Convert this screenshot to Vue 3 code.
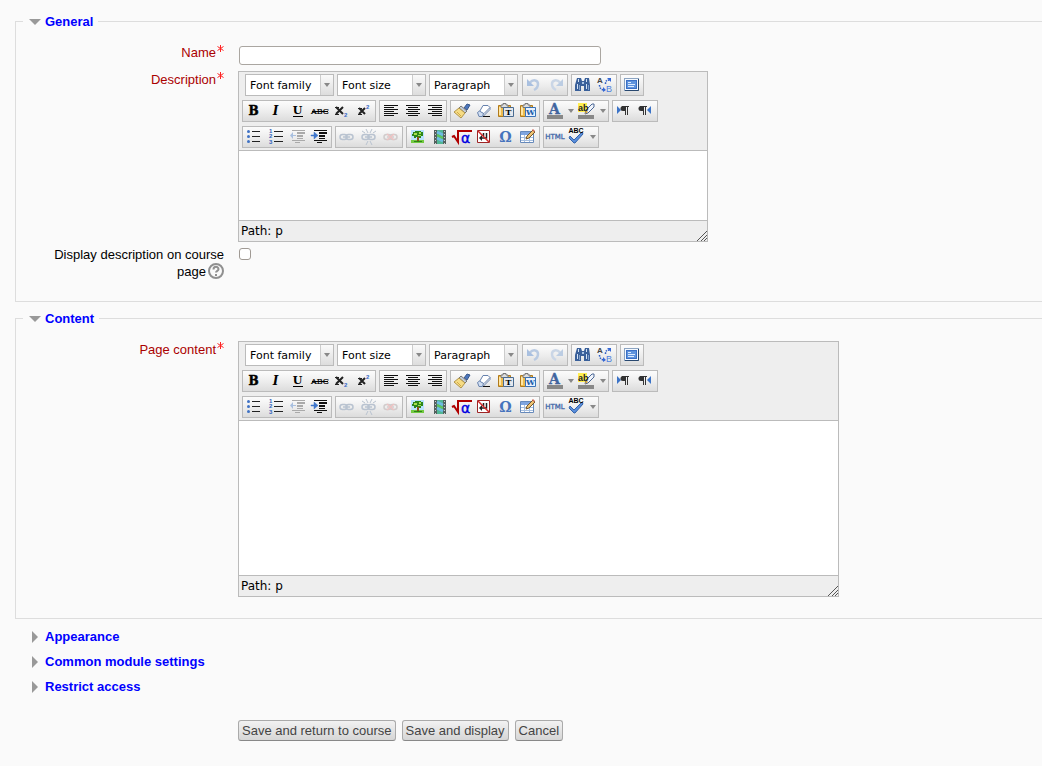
<script setup>
import { reactive, ref } from 'vue';

const name = ref('');
const showDescription = ref(false);
const collapsed = ['Appearance', 'Common module settings', 'Restrict access'];

const editors = reactive({
  description: { text: '', size: 'small' },
  page: { text: '', size: 'large' },
});

const selects = ['Font family', 'Font size', 'Paragraph'];

const toolbar = [
  [['undo', 'redo'], ['find', 'replace'], ['fullscreen']],
  [
    ['bold', 'italic', 'underline', 'strike', 'sub', 'sup'],
    ['left', 'center', 'right'],
    ['cleanup', 'eraser', 'pastetext', 'pasteword'],
    ['forecolor', 'split', 'backcolor', 'split'],
    ['ltr', 'rtl'],
  ],
  [
    ['bullist', 'numlist', 'outdent', 'indent'],
    ['link', 'unlink', 'nolink'],
    ['image', 'media', 'math', 'nbsp', 'omega', 'table'],
    ['html', 'spell', 'split'],
  ],
];

const disabled = ['undo', 'redo', 'outdent', 'link', 'unlink', 'nolink'];

const serif = 'font-family="DejaVu Serif, serif" font-weight="bold"';
const sans = 'font-family="Liberation Sans, sans-serif"';
const clipboard = '<path d="M3.500 4.500h12v11h-12z" fill="#eebb4e" stroke="#b07a1c"/><path d="M5 6v8" stroke="#ffe7a6" stroke-width="2"/><path d="M6 6.500V4h2V2.500h3V4h2v2.500z" fill="#ddd" stroke="#777"/>';
const pilcrow = '<path d="M8 5.500h7M11.500 5v9M13.500 5v9" stroke="#333"/><path d="M11.500 5H9a2.250 2.250 0 0 0 0 5h2.500z" fill="#333"/>';
const chain = '<rect x="4" y="7.500" width="7" height="5" rx="2.500"/><rect x="10" y="7.500" width="7" height="5" rx="2.500"/><path d="M7 10h7"/>';

// every glyph is drawn on a 22x20 canvas
const icons = {
  undo: '<path d="M7 7.500C10 4 15 5 15 9c0 3-2 5-4 6" fill="none" stroke="#b9cae2" stroke-width="2.500"/><path d="M4 4v7h7z" fill="#a9c0e0"/>',
  redo: '<path d="M15 7.500C12 4 7 5 7 9c0 3 2 5 4 6" fill="none" stroke="#cad6e6" stroke-width="2.500"/><path d="M18 4v7h-7z" fill="#bccde3"/>',
  find: '<path d="M5 3h4l1 3h2l1-3h4l1 7v6h-6v-5h-3v5H3v-6z" fill="#3a609a"/><path d="M6.500 4v3M14.500 4v3M5.500 9v5M14.500 9v5" stroke="#d4e3f5"/><path d="M7.500 10v5M16.500 10v5" stroke="#7f9fca"/><path d="M10 7h2v2h-2z" fill="#a9c3e4"/>',
  replace: `<text x="3" y="8" font-size="8" font-weight="bold" ${sans} fill="#444">A</text><text x="12" y="17" font-size="9" ${sans} fill="#4d82df">B</text><path d="M11.500 9c0-3 1-4 4-4M5.500 10c0 3 2 5 5 5" fill="none" stroke="#315fc8" stroke-width="1.500" stroke-dasharray="1.500 1"/><path d="M13 3h4v4zM9 12l3 3-3 2z" fill="#3467d6"/>`,
  fullscreen: '<rect x="3.500" y="3.500" width="14" height="12" fill="#f4f9ff" stroke="#8ca4c2"/><path d="M4 15.500h13.500V4" fill="none" stroke="#28486f"/><rect x="5" y="5" width="11" height="9" fill="#3b70c6"/><rect x="6" y="6" width="9" height="7" fill="#5f94dd"/><path d="M7 7.500h3M7 9.500h7M7 11.500h6" stroke="#dceaff"/>',
  bold: `<text x="10.500" y="14" text-anchor="middle" font-size="12" stroke="#000" stroke-width=".5" ${serif}>B</text>`,
  italic: `<text x="10.500" y="14" text-anchor="middle" font-size="12" font-style="italic" ${serif}>I</text>`,
  underline: `<text x="10.500" y="13" text-anchor="middle" font-size="11" ${serif}>U</text><path d="M6 15.500h10" stroke="#000"/>`,
  strike: `<text x="11" y="13" text-anchor="middle" font-size="8" stroke="#000" stroke-width=".2" font-family="DejaVu Serif, serif">ABC</text><path d="M3 10.500h16" stroke="#000"/>`,
  sub: `<path d="M5 6l7 7M12 6l-7 7" stroke="#222" stroke-width="2"/><path d="M4 6.500h4M4 13.500h4" stroke="#222"/><text x="13" y="16" font-size="6" font-weight="bold" ${sans} fill="#3768c8">2</text>`,
  sup: `<path d="M6 7l6 6M12 7l-6 6" stroke="#222" stroke-width="2"/><path d="M5 7.500h4M5 13.500h4" stroke="#222"/><text x="13" y="8" font-size="6" font-weight="bold" ${sans} fill="#3768c8">2</text>`,
  left: '<path d="M4 4.500h14M4 6.500h10M4 8.500h14M4 10.500h10M4 12.500h14M4 14.500h10" stroke="#111"/>',
  center: '<path d="M4 4.500h14M6 6.500h10M4 8.500h14M6 10.500h10M4 12.500h14M6 14.500h10" stroke="#111"/>',
  right: '<path d="M4 4.500h14M8 6.500h10M4 8.500h14M8 10.500h10M4 12.500h14M8 14.500h10" stroke="#111"/>',
  cleanup: '<path d="M13 7l3-4 3 1-3 5z" fill="#4c76bd" stroke="#36568b"/><path d="M10 5l6 5-2 2-6-5z" fill="#c2cbd8" stroke="#777"/><path d="M8 7l6 5-4 5-7-6z" fill="#f6dc84" stroke="#b19449"/><path d="M6 11l4 4" stroke="#d1aa48"/>',
  eraser: '<path d="M10 4.500h5l2 2-6 6-5-1z" fill="#fff" stroke="#6782ad"/><path d="M4.500 11.500l2-1.500 4 2.500-1 3H6z" fill="#cfddf1" stroke="#6782ad"/><path d="M17 6.500v2l-7 7" fill="none" stroke="#6782ad"/><path d="M10 15.500h7" stroke="#111"/>',
  pastetext: `${clipboard}<path d="M8.500 6.500h10v9h-10z" fill="#e4e8ee" stroke="#496b91"/><text x="13.500" y="14" text-anchor="middle" font-size="8" ${serif}>T</text>`,
  pasteword: `${clipboard}<path d="M8.500 6.500h10v9h-10z" fill="#e7f1ff" stroke="#3972b7"/><text x="13.500" y="14" text-anchor="middle" font-size="8" ${serif} fill="#205ca8">W</text>`,
  forecolor: `<text x="10.500" y="13" text-anchor="middle" font-size="14" stroke="#41659f" stroke-width=".3" ${serif} fill="#41659f">A</text><path d="M3 14h16v4H3z" fill="#888"/>`,
  backcolor: `<path d="M2 2h9v9H2z" fill="#fff04f"/><path d="M9 13l1-4 6-6h2v3l-6 6z" fill="#f0f4fb" stroke="#4a6694"/><path d="M9 13l1-4 2 2z" fill="#d89f35"/><text x="2" y="10" font-size="9" font-weight="bold" ${sans} fill="#222">ab</text><path d="M2 14h16v4H2z" fill="#888"/>`,
  split: '<path d="M2 8h6l-3 4z" fill="#888"/>',
  ltr: `<path d="M4 5l4 4-4 4z" fill="#3b73c7"/><g transform="translate(1 0)">${pilcrow}</g>`,
  rtl: `<g transform="translate(-3 0)">${pilcrow}</g><path d="M16 5l-4 4 4 4z" fill="#3b73c7"/>`,
  bullist: '<path d="M9 4.500h8M9 9.500h8M9 14.500h8" stroke="#222"/><g fill="#3f72c4"><circle cx="5.500" cy="4.500" r="1.500"/><circle cx="5.500" cy="9.500" r="1.500"/><circle cx="5.500" cy="14.500" r="1.500"/></g>',
  numlist: `<path d="M9 4.500h9M9 9.500h9M9 14.500h9" stroke="#222"/><g font-size="6" font-weight="bold" ${sans} fill="#3163ba"><text x="4" y="6">1</text><text x="4" y="11">2</text><text x="4" y="17">3</text></g>`,
  outdent: '<path d="M5 3.500h13M10 11.500h6M5 13.500h13M8 15.500h5" stroke="#aaa"/><path d="M10 6h8M10 9h6" stroke="#aaa" stroke-width="2"/><path d="M6 5v7L3 8.500zM6 8h3v1H6z" fill="#a9c0e0"/>',
  indent: '<path d="M5 3.500h13M10 11.500h6M5 13.500h13M8 15.500h5" stroke="#111"/><path d="M10 6h8M10 9h6" stroke="#111" stroke-width="2"/><path d="M5 5v7l4-3.500zM2 8h3v1H2z" fill="#3f76ca" stroke="#3f76ca" stroke-width=".5"/>',
  link: `<g fill="none" stroke="#b9c3d0" stroke-width="1.500">${chain}</g>`,
  unlink: `<g fill="none" stroke="#b9c3d0" stroke-width="1.500">${chain}<path d="M8 2l2 4M14 2l-2 4M8 18l2-4M14 18l-2-4M4 4l3 2M18 4l-3 2" stroke-width="1"/></g>`,
  nolink: `<g fill="none" stroke="#d0cccc" stroke-width="1.500">${chain}<path d="M7 7l7 6M14 7l-7 6" stroke="#eec3c3"/></g>`,
  image: '<path d="M4 3h13v13H4z" fill="#b8e2ff"/><path d="M4 13h13v3H4z" fill="#72c940"/><path d="M10 9h2v6h-2z" fill="#8c4e14"/><path d="M5 7h1V5h2V4h6v1h2v4h-2v2h-2v-1H9v1H7V9H5z" fill="#2c8519"/><path d="M7 6h3v2H7zM12 5h2v2h-2zM11 8h3v1h-3z" fill="#a5df4f"/><path d="M7 14h8v1H7z" fill="#2c8519"/>',
  media: '<path d="M5 3h12v14H5z" fill="#53605e"/><path d="M8 3h6v14H8z" fill="#52b795"/><path d="M8 5l6 3M8 11l6 3" stroke="#6dbbe4" stroke-width="3"/><path d="M8 8l6 3" stroke="#5fc45d" stroke-width="2"/><path d="M6.500 4v13M15.500 4v13" stroke="#ccd2d0" stroke-dasharray="1 2"/>',
  math: '<path d="M1 10l2-1 4 6V4h14" fill="none" stroke="#b00000" stroke-width="2"/><text x="10" y="16" font-size="14" font-family="DejaVu Sans, sans-serif" fill="#0000e0" stroke="#0000e0" stroke-width=".4">α</text>',
  nbsp: '<path d="M4.500 3.500h12v12h-12z" fill="#fff" stroke="#9c2525"/><path d="M13.500 6v5H8M10.500 6v3" fill="none" stroke="#222" stroke-width="1.500"/><path d="M9 8v6l-3-3z" fill="#222"/><path d="M5 4l11 11" stroke="#d22a2a" stroke-width="1.500"/>',
  omega: `<text x="10.500" y="15" text-anchor="middle" font-size="14" ${serif} fill="#4674bd">Ω</text>`,
  table: '<path d="M3.500 4.500h13v11h-13z" fill="#fff" stroke="#6689ba"/><path d="M4 5h12v3H4z" fill="#7fa5df"/><path d="M4 10.500h12M4 13.500h12M7.500 8v7M12.500 8v7" stroke="#a5bedf"/><path d="M9 12l1-3 6-6 2 2-6 6z" fill="#edc373" stroke="#73562b"/><path d="M15 3l1-1 2 2-1 1z" fill="#d46b5b"/>',
  html: '<text x="11" y="12" text-anchor="middle" font-size="7" font-family="DejaVu Sans, sans-serif" fill="#3e67a8" stroke="#3e67a8" stroke-width=".3">HTML</text>',
  spell: `<path d="M4 9l4 4 8-8 1 2-8 9H8l-5-5z" fill="#5a8edb" stroke="#3564aa"/><text x="10" y="6" text-anchor="middle" font-size="7" font-weight="bold" ${sans}>ABC</text>`,
};
</script>

<template>
  <form class="mform" @submit.prevent>
    <fieldset v-for="section in ['General', 'Content']" :key="section" class="section">
      <legend>
        <a href="#" class="section-link"><i class="arrow-down"></i>{{ section }}</a>
      </legend>

      <div v-if="section === 'General'" class="row name-row">
        <label class="row-label required" for="name">Name<svg class="req" viewBox="0 0 7 7"><path d="M3.500 0v7M.5 1.500l6 4M6.500 1.500l-6 4" /></svg></label>
        <div class="field"><input id="name" v-model="name" class="name-input" type="text" /></div>
      </div>

      <template v-for="(editor, key) in editors" :key="key">
        <div v-if="(key === 'page') === (section === 'Content')" class="row">
          <label class="row-label required" :for="key">{{ key === 'page' ? 'Page content' : 'Description' }}<svg class="req" viewBox="0 0 7 7"><path d="M3.500 0v7M.5 1.500l6 4M6.500 1.500l-6 4" /></svg></label>
          <div class="field">
            <div class="editor" :class="editor.size">
              <div class="toolbar">
                <div v-for="(groups, r) in toolbar" :key="r" class="tool-row">
                  <div v-if="r === 0" class="select-list">
                    <span v-for="label in selects" :key="label" class="select-box">
                      <select :aria-label="label"><option>{{ label }}</option></select>
                      <svg class="select-arrow" viewBox="0 0 12 20"><path d="M3 8h6l-3 4z" fill="#888" /></svg>
                    </span>
                  </div>
                  <div v-for="(group, g) in groups" :key="g" class="group">
                    <button
                      v-for="(icon, i) in group"
                      :key="i"
                      type="button"
                      class="tool"
                      :class="{ split: icon === 'split' }"
                      :aria-label="icon"
                      :disabled="disabled.includes(icon)"
                    >
                      <svg :viewBox="icon === 'split' ? '0 0 10 20' : '0 0 22 20'" v-html="icons[icon]"></svg>
                    </button>
                  </div>
                </div>
              </div>
              <textarea :id="key" v-model="editor.text"></textarea>
              <div class="status">
                <span>Path: p</span>
                <svg class="grip" viewBox="0 0 11 11"><path d="M1 11L11 1M5 11l6-6M8 11l3-3" /></svg>
              </div>
            </div>
          </div>
        </div>
      </template>

      <div v-if="section === 'General'" class="row">
        <div class="row-label">
          <label for="show-description">Display description on course page</label>
          <button type="button" class="help" aria-label="Help">
            <svg viewBox="0 0 16 16">
              <circle cx="8" cy="8" r="7" />
              <path d="M5.500 6.500C5.500 3 10.500 3 10.500 6.200c0 1.600-2.500 1.600-2.500 3.300M8 11v2" />
            </svg>
          </button>
        </div>
        <div class="field"><input id="show-description" v-model="showDescription" class="check" type="checkbox" /></div>
      </div>
    </fieldset>

    <div class="collapsed-list">
      <a v-for="item in collapsed" :key="item" href="#" class="section-link"><i class="arrow-right"></i>{{ item }}</a>
    </div>

    <div class="actions">
      <button type="submit" class="action">Save and return to course</button>
      <button type="button" class="action">Save and display</button>
      <button type="button" class="action">Cancel</button>
    </div>
  </form>
</template>

<style>
body {
  margin: 0;
  background: #fafafa;
}
</style>

<style scoped>
.mform {
  padding: 13px 0 24px 15px;
  font: 13px/17px "Liberation Sans", Arial, sans-serif;
  color: #000;
}

.section {
  min-width: 0;
  margin: 0 0 8px;
  padding: 14px 0 17px;
  border: 1px solid #ddd;
  border-right: 0;
}

legend {
  margin-left: 7px;
  padding: 0 5px 0 6px;
}

.section-link {
  display: flex;
  align-items: center;
  font-weight: bold;
  line-height: 17px;
  color: #00f;
  text-decoration: none;
}

.arrow-down {
  margin-right: 4px;
  border: 6px solid transparent;
  border-top-color: #999;
  border-bottom: 0;
}

.arrow-right {
  margin-right: 7px;
  border: 6px solid transparent;
  border-left-color: #999;
  border-right: 0;
}

.row {
  display: flex;
  gap: 14px;
  margin-bottom: 4px;
  padding-left: 24px;
}

.name-row {
  margin-bottom: 6px;
}

.row-label {
  flex: 0 0 184px;
  text-align: right;
}

.required {
  color: #a00;
}

.req {
  width: 7px;
  height: 7px;
  margin-left: 1px;
  vertical-align: 5px;
  fill: none;
  stroke: #f22;
}

.field {
  flex: 1;
  min-width: 0;
}

.name-input {
  display: block;
  box-sizing: border-box;
  width: 100%;
  max-width: 362px;
  height: 19px;
  margin: 2px 0 0 1px;
  padding: 1px 4px;
  font: inherit;
  background: #fff;
  border: 1px solid #aaa6a1;
  border-radius: 3px;
}

.check {
  display: block;
  appearance: none;
  box-sizing: border-box;
  width: 12px;
  height: 12px;
  margin: 2px 0 0 1px;
  background: #fff;
  border: 1px solid #a09a94;
  border-radius: 3px;
}

.check:checked {
  background: #777;
}

.help {
  width: 16px;
  height: 16px;
  margin: 0 0 0 2px;
  padding: 0;
  vertical-align: -3px;
  background: none;
  border: 0;
}

.help svg {
  display: block;
  fill: none;
  stroke: #909090;
  stroke-width: 2;
}

.editor {
  box-sizing: border-box;
  width: 100%;
  border: 1px solid #bbb;
  background: #eee;
}

.small {
  max-width: 470px;
}

.large {
  max-width: 601px;
}

.toolbar {
  display: flex;
  flex-direction: column;
  gap: 4px;
  padding: 2px 3px;
}

.tool-row,
.select-list {
  display: flex;
  gap: 3px;
}

.select-list {
  padding: 0 1px 0 3px;
}

.select-box {
  position: relative;
  width: 89px;
  height: 22px;
}

select {
  display: block;
  appearance: none;
  box-sizing: border-box;
  width: 100%;
  height: 22px;
  margin: 0;
  padding: 0 13px 0 4px;
  font: 11px "DejaVu Sans", Verdana, sans-serif;
  color: #000;
  background: #fff;
  border: 1px solid #bbb;
  border-radius: 0;
}

.select-arrow {
  position: absolute;
  top: 1px;
  right: 1px;
  width: 12px;
  height: 20px;
  background: linear-gradient(#fafafa, #ddd);
  border-left: 1px solid #ccc;
  pointer-events: none;
}

.group {
  display: flex;
  border: 1px solid #bbb;
  background: linear-gradient(#fcfcfc, #eee 50%, #dcdcdc);
}

.tool {
  width: 22px;
  height: 20px;
  margin: 0;
  padding: 0;
  background: none;
  border: 0;
}

.tool.split {
  width: 10px;
}

.tool svg {
  display: block;
  width: 100%;
  height: 20px;
}

textarea {
  display: block;
  box-sizing: border-box;
  width: 100%;
  height: 71px;
  margin: 0;
  padding: 8px;
  font: inherit;
  background: #fff;
  border: solid #bbb;
  border-width: 1px 0;
  border-radius: 0;
  outline: 0;
  resize: none;
}

.large textarea {
  height: 156px;
}

.status {
  display: flex;
  align-items: flex-end;
  justify-content: space-between;
  padding-left: 2px;
  font: 12px/20px "DejaVu Sans", Verdana, sans-serif;
}

.grip {
  width: 11px;
  height: 11px;
  fill: none;
  stroke: #555;
}

.collapsed-list {
  display: flex;
  flex-direction: column;
  align-items: flex-start;
  gap: 8px;
  margin-top: 9px;
  padding-left: 17px;
}

.actions {
  display: flex;
  flex-wrap: wrap;
  gap: 6px;
  margin: 25px 0 0 223px;
}

.action {
  height: 21px;
  margin: 0;
  padding: 0 3px;
  font: 13px "Liberation Sans", Arial, sans-serif;
  color: #444;
  background: linear-gradient(#f2f2f2, #d6d6d6);
  border: 1px solid #aaa;
  border-bottom-color: #888;
  border-radius: 3px;
}
</style>
